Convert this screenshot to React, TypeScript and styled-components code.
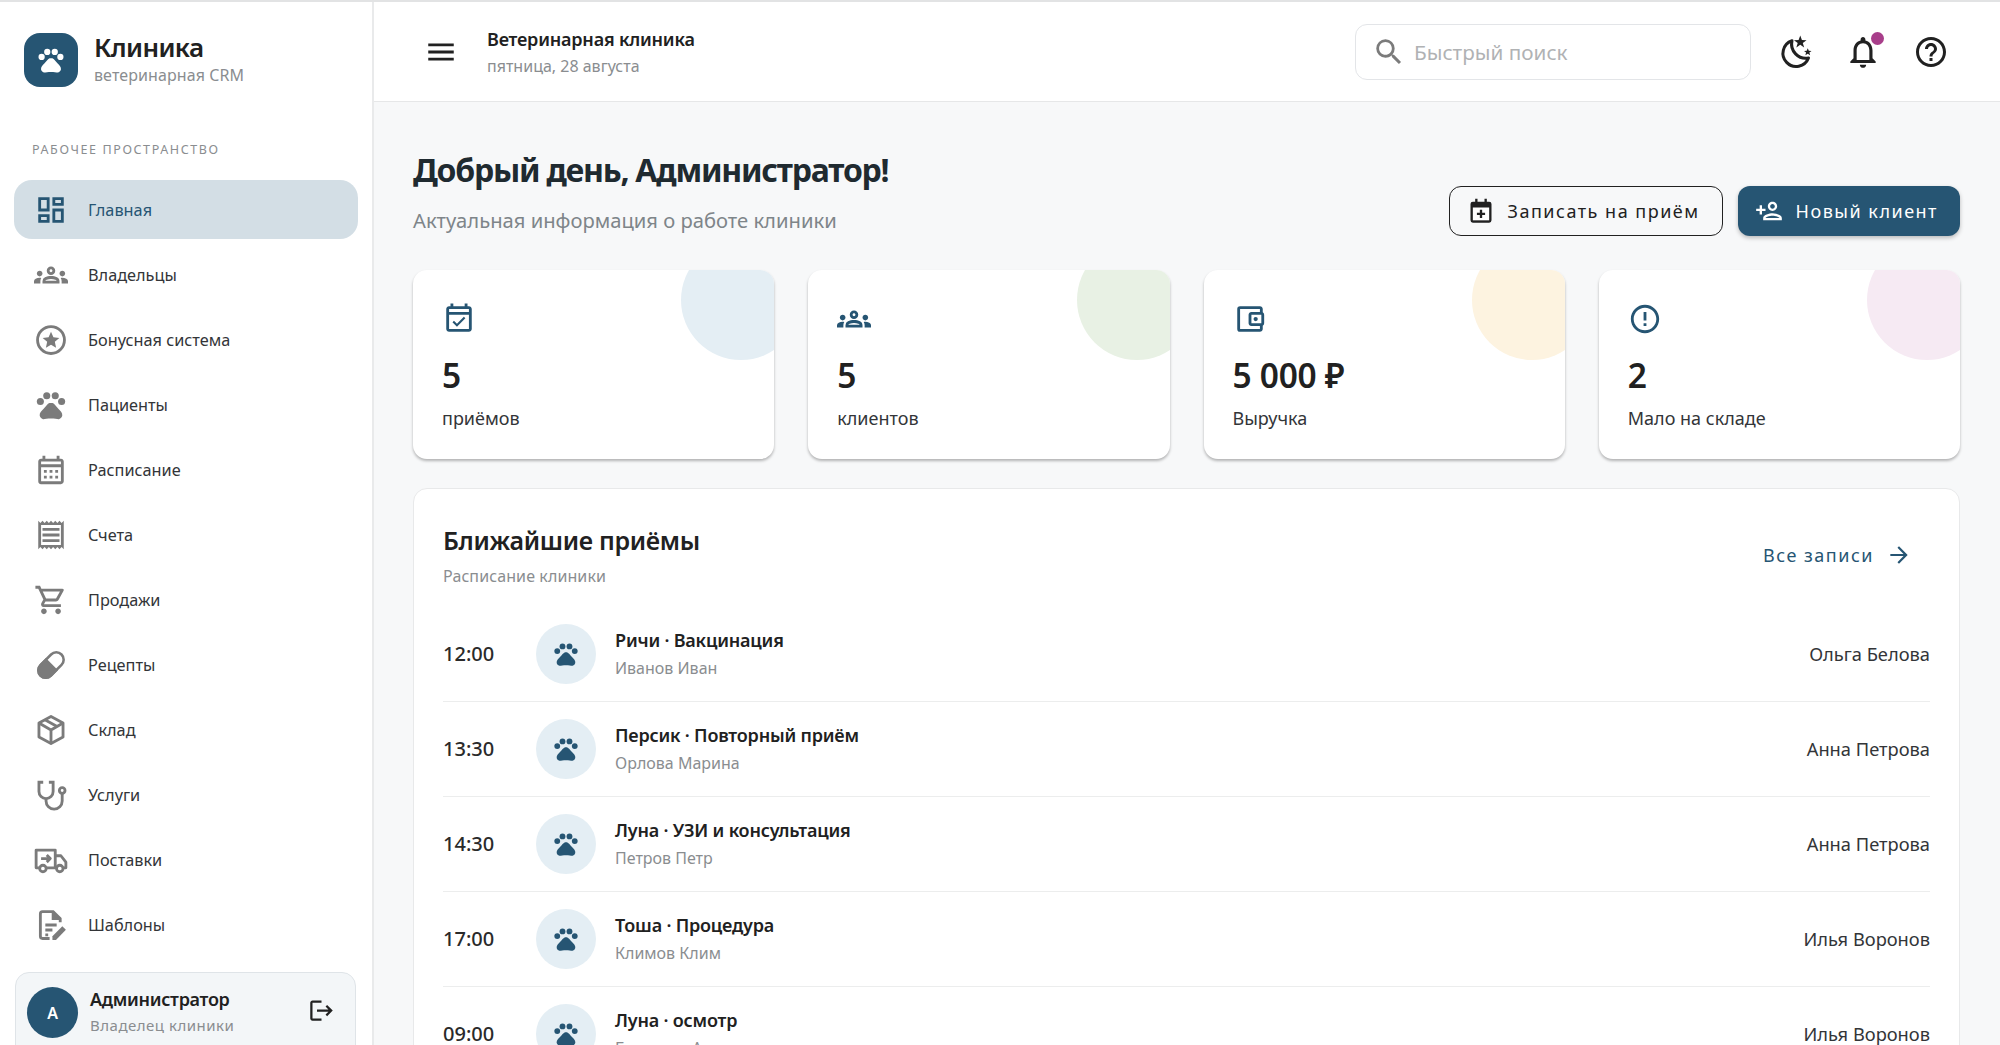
import * as React from "react";
import styled, { createGlobalStyle } from "styled-components";
import {
  MdArrowForward,
  MdErrorOutline,
  MdHelpOutline,
  MdLogout,
  MdMenu,
  MdOutlineAccountBalanceWallet,
  MdOutlineCalendarMonth,
  MdOutlineDashboard,
  MdOutlineEventAvailable,
  MdOutlineGroups,
  MdOutlineNotifications,
  MdOutlinePersonAdd,
  MdOutlineReceipt,
  MdOutlineShoppingCart,
  MdPets,
  MdSearch,
} from "react-icons/md";

const FONT = `"Noto Sans", "Open Sans", Roboto, sans-serif`;
const PRIMARY = "#265573";

const GlobalStyle = createGlobalStyle`
  html, body {
    margin: 0;
    padding: 0;
    height: 100%;
    overflow: hidden;
    background: #f7f8f9;
  }
  * { box-sizing: border-box; }
  body { font-family: ${FONT}; color: #212121; }
`;

function BonusIcon() {
  return (
    <svg viewBox="0 0 24 24" width="1em" height="1em" fill="none" stroke="currentColor" strokeWidth="2">
      <circle cx="12" cy="12" r="9.5" />
      <path d="m12 6.2 1.7 3.9 4.2.4-3.2 2.8.9 4.1L12 15.3l-3.6 2.1.9-4.1-3.2-2.8 4.2-.4z" fill="currentColor" stroke="none" />
    </svg>
  );
}

function PillIcon() {
  return (
    <svg viewBox="0 0 24 24" width="1em" height="1em" fill="none" stroke="currentColor" strokeWidth="1.8">
      <g transform="rotate(-45 12 12)">
        <rect x="1.5" y="6.8" width="21" height="10.4" rx="5.2" />
        <path d="M12 6.8H6.7a5.2 5.2 0 0 0 0 10.4H12z" fill="currentColor" />
      </g>
    </svg>
  );
}

function BoxIcon() {
  return (
    <svg viewBox="0 0 24 24" width="1em" height="1em" fill="none" stroke="currentColor" strokeWidth="2" strokeLinejoin="round">
      <path d="M12 2.5 20.5 7v10L12 21.5 3.5 17V7z" />
      <path d="M3.5 7 12 12l8.5-5M12 12v9.5M7.7 4.8l8.6 4.7" />
    </svg>
  );
}

function StethoscopeIcon() {
  return (
    <svg viewBox="0 0 24 24" width="1em" height="1em" fill="none" stroke="currentColor" strokeWidth="2">
      <path d="M6.5 3H3.5v6.5a5 5 0 0 0 10 0V3h-3" />
      <path d="M8.5 14.5v1.8a5.7 5.7 0 0 0 11.4 0V11" />
      <circle cx="19.9" cy="8.8" r="2" />
    </svg>
  );
}

function TruckIcon() {
  return (
    <svg viewBox="0 0 24 24" width="1em" height="1em" fill="none" stroke="currentColor" strokeWidth="2" strokeLinejoin="round">
      <path d="M3.5 17.5H1.5V5H15v12.5H9" />
      <path d="M15 9h4l3.5 4.5v4H21M15 17.5h.5" />
      <circle cx="6.3" cy="18" r="2.3" />
      <circle cx="18.2" cy="18" r="2.3" />
      <path d="M5 11h6.500M9 8.500l2.500 2.500L9 13.500" />
    </svg>
  );
}

function TemplateIcon() {
  return (
    <svg viewBox="0 0 24 24" width="1em" height="1em" fill="none" stroke="currentColor" strokeWidth="2">
      <path d="M11 21.5H6A1.500 1.500 0 0 1 4.500 20V4A1.500 1.500 0 0 1 6 2.500h7.500l5 5V10" />
      <path d="M13.500 2.500v5h5" fill="currentColor" />
      <path d="M8 12h8M8 15.500h5M8 19h2" />
      <path d="M13 22.500v-2.600l7-7 2.500 2.500-7 7.100z" fill="currentColor" stroke="none" />
    </svg>
  );
}

function NightIcon() {
  return (
    <svg viewBox="0 0 24 24" width="1em" height="1em" fill="none" stroke="currentColor" strokeWidth="2">
      <path d="M10 4.500a8.800 8.800 0 1 0 11 11.500 9.500 9.500 0 0 1-11-11.500z" strokeLinejoin="round" />
      <path d="m15.500 1 1.100 3 3.100.1-2.500 1.900.9 3-2.600-1.800-2.600 1.800.9-3-2.500-1.900 3.100-.1z" fill="currentColor" stroke="none" />
      <path d="m20.500 9.500.7 1.700 1.800.1-1.400 1.100.5 1.800-1.600-1-1.600 1 .5-1.800-1.400-1.100 1.800-.1z" fill="currentColor" stroke="none" />
    </svg>
  );
}

function CalendarAddIcon() {
  return (
    <svg viewBox="0 0 24 24" width="1em" height="1em" fill="currentColor">
      <path d="M7 1.500h2V4h6V1.500h2V4h2a2 2 0 0 1 2 2v14a2 2 0 0 1-2 2H5a2 2 0 0 1-2-2V6a2 2 0 0 1 2-2h2z" />
      <rect x="5" y="9" width="14" height="11" fill="#fff" />
      <path d="M11 11h2v2.500h2.500v2H13V18h-2v-2.500H8.500v-2H11z" />
    </svg>
  );
}

const Shell = styled.div`
  display: flex;
  height: 1045px;
  overflow: hidden;
  border-top: 2px solid #e2e3e4;
  background: #f7f8f9;
`;

const Sidebar = styled.aside`
  flex: 0 0 374px;
  display: flex;
  flex-direction: column;
  background: #ffffff;
  border-right: 2px solid #e9eaeb;
  padding: 31px 14px 0 14px;
`;

const Brand = styled.div`
  display: flex;
  align-items: flex-start;
  gap: 16px;
  padding-left: 10px;
`;

const BrandMark = styled.div`
  width: 54px;
  height: 54px;
  border-radius: 16px;
  background: ${PRIMARY};
  color: #fff;
  display: flex;
  align-items: center;
  justify-content: center;
  font-size: 30px;
`;

const BrandText = styled.div`
  display: flex;
  flex-direction: column;
  gap: 4px;
`;

const BrandName = styled.div`
  font-size: 26px;
  font-weight: 600;
  line-height: 28px;
  letter-spacing: -0.6px;
  color: #212121;
`;

const BrandSub = styled.div`
  font-size: 16px;
  line-height: 20px;
  letter-spacing: 0.1px;
  color: #8a8d90;
`;

const SectionLabel = styled.div`
  margin: 54px 0 21px 18px;
  font-size: 12.5px;
  line-height: 18px;
  letter-spacing: 1.6px;
  color: #8a8d90;
`;

const NavList = styled.nav`
  display: flex;
  flex-direction: column;
  gap: 6px;
`;

const NavItem = styled.div<{ $active?: boolean }>`
  flex: 0 0 59px;
  display: flex;
  align-items: center;
  gap: 20px;
  padding-left: 20px;
  border-radius: 18px;
  font-size: 16.3px;
  background: ${(p) => (p.$active ? "#d3dee5" : "transparent")};
  color: ${(p) => (p.$active ? PRIMARY : "#333538")};
`;

const NavIcon = styled.span<{ $active?: boolean }>`
  width: 34px;
  height: 34px;
  font-size: 34px;
  display: flex;
  color: ${(p) => (p.$active ? PRIMARY : "#7b7b7b")};
`;

const UserCard = styled.div`
  margin: 18px 2px 0 1px;
  flex: 0 0 90px;
  display: flex;
  align-items: flex-start;
  gap: 12px;
  padding: 14px 20px 0 11px;
  border: 1px solid #dfe4e8;
  border-radius: 14px;
  background: #f3f6f8;
`;

const Avatar = styled.div`
  width: 51px;
  height: 51px;
  flex: none;
  border-radius: 50%;
  background: ${PRIMARY};
  color: #fff;
  font-size: 16px;
  font-weight: 600;
  display: flex;
  align-items: center;
  justify-content: center;
`;

const UserText = styled.div`
  flex: 1;
  display: flex;
  flex-direction: column;
  gap: 3px;
`;

const UserName = styled.div`
  font-size: 18px;
  line-height: 24px;
  font-weight: 600;
  letter-spacing: -0.3px;
`;

const UserRole = styled.div`
  font-size: 15px;
  line-height: 22px;
  letter-spacing: 0.5px;
  color: #8a8d90;
`;

const LogoutButton = styled.div`
  display: flex;
  font-size: 27px;
  margin-top: 10px;
  color: #212121;
`;

const Main = styled.div`
  flex: 1;
  min-width: 0;
  display: flex;
  flex-direction: column;
`;

const Topbar = styled.header`
  flex: 0 0 100px;
  display: flex;
  align-items: center;
  padding: 0 35px 0 50px;
  background: #ffffff;
  border-bottom: 1px solid #e6e7e8;
`;

const MenuButton = styled.div`
  display: flex;
  font-size: 34px;
  color: #212121;
  margin-right: 29px;
`;

const TopTitleBlock = styled.div`
  flex: 1;
  display: flex;
  flex-direction: column;
  gap: 5px;
`;

const TopTitle = styled.div`
  font-size: 18px;
  line-height: 24px;
  font-weight: 600;
  letter-spacing: -0.2px;
`;

const TopSub = styled.div`
  font-size: 16px;
  line-height: 20px;
  color: #8a8d90;
`;

const Search = styled.div`
  width: 396px;
  height: 56px;
  display: flex;
  align-items: center;
  gap: 8px;
  padding-left: 16px;
  border: 1px solid #e3e5e8;
  border-radius: 12px;
  color: #7b7b7b;
  font-size: 34px;
  margin-right: 10px;
  svg { flex: none; }
`;

const SearchHint = styled.span`
  font-size: 20.7px;
  color: #b0b2b4;
`;

const TopIcon = styled.div<{ $size?: number }>`
  position: relative;
  width: 68px;
  height: 36px;
  display: flex;
  align-items: center;
  justify-content: center;
  font-size: ${(p) => p.$size ?? 36}px;
  color: #212121;
`;

const Dot = styled.span`
  position: absolute;
  top: -2px;
  left: 42px;
  width: 13px;
  height: 13px;
  border-radius: 50%;
  background: #a83e8a;
`;

const Content = styled.main`
  flex: 1;
  padding: 45px 40px 0 39px;
`;

const Hero = styled.div`
  display: flex;
  align-items: flex-end;
  justify-content: space-between;
`;

const Greeting = styled.h1`
  margin: 0 0 12px;
  font-size: 32px;
  line-height: 46px;
  font-weight: 700;
  letter-spacing: -1.25px;
  color: #1f2a30;
`;

const GreetingSub = styled.div`
  font-size: 20.2px;
  line-height: 31px;
  color: #7e8589;
`;

const Actions = styled.div`
  display: flex;
  gap: 15px;
`;

const ActionButton = styled.div<{ $primary?: boolean }>`
  height: 50px;
  display: flex;
  align-items: center;
  gap: 13px;
  padding: 0 22px 0 17px;
  border-radius: 12px;
  font-size: 18px;
  letter-spacing: 1.5px;
  background: ${(p) => (p.$primary ? PRIMARY : "transparent")};
  color: ${(p) => (p.$primary ? "#fff" : "#212121")};
  border: ${(p) => (p.$primary ? "none" : "1.5px solid #212121")};
  box-shadow: ${(p) => (p.$primary ? "0 2px 4px rgba(0,0,0,.25)" : "none")};
  svg { font-size: 28px; flex: none; }
`;

const StatGrid = styled.div`
  margin-top: 34px;
  display: grid;
  grid-template-columns: repeat(4, 1fr);
  gap: 34px;
`;

const StatCard = styled.div`
  position: relative;
  overflow: hidden;
  height: 189px;
  padding: 32px 29px 0;
  border-radius: 14px;
  background: #fff;
  box-shadow: 0 2px 3px rgba(0, 0, 0, 0.28);
`;

const StatBlob = styled.span<{ $color: string }>`
  position: absolute;
  top: -30px;
  right: -27px;
  width: 120px;
  height: 120px;
  border-radius: 50%;
  background: ${(p) => p.$color};
`;

const StatIcon = styled.div`
  display: flex;
  font-size: 34px;
  color: ${PRIMARY};
`;

const StatValue = styled.div`
  margin-top: 17px;
  font-size: 33.5px;
  line-height: 44px;
  font-weight: 600;
  letter-spacing: -0.3px;
`;

const StatLabel = styled.div`
  margin-top: 8px;
  font-size: 18px;
  line-height: 26px;
  color: #333538;
`;

const Panel = styled.section`
  margin-top: 29px;
  height: 620px;
  padding: 33px 29px 0;
  border: 1px solid #e8e9ea;
  border-radius: 14px;
  background: #fff;
`;

const PanelHead = styled.div`
  display: flex;
  justify-content: space-between;
  align-items: center;
`;

const PanelTitle = styled.h2`
  margin: 0 0 7px;
  font-size: 25px;
  line-height: 36px;
  font-weight: 600;
  letter-spacing: -0.3px;
`;

const PanelSub = styled.div`
  font-size: 16px;
  line-height: 22px;
  letter-spacing: 0.1px;
  color: #8a8d90;
`;

const AllLink = styled.div`
  display: flex;
  align-items: center;
  gap: 12px;
  margin-right: 18px;
  font-size: 18px;
  letter-spacing: 1.5px;
  color: ${PRIMARY};
  svg { font-size: 26px; }
`;

const VisitList = styled.div`
  margin-top: 20px;
`;

const VisitRow = styled.div`
  height: 95px;
  display: flex;
  align-items: center;
  border-bottom: 1px solid #eceded;
  padding-bottom: 1px;
`;

const VisitTime = styled.div`
  flex: 0 0 93px;
  font-size: 20px;
  font-weight: 500;
  color: #2a2a2a;
`;

const VisitBadge = styled.div`
  flex: none;
  width: 60px;
  height: 60px;
  margin-right: 19px;
  border-radius: 50%;
  background: #e4eef4;
  color: ${PRIMARY};
  font-size: 28px;
  display: flex;
  align-items: center;
  justify-content: center;
`;

const VisitText = styled.div`
  flex: 1;
  display: flex;
  flex-direction: column;
  gap: 5px;
`;

const VisitTitle = styled.div`
  font-size: 18px;
  line-height: 24px;
  font-weight: 600;
  letter-spacing: -0.2px;
`;

const VisitOwner = styled.div`
  font-size: 16px;
  line-height: 22px;
  color: #8a8d90;
`;

const VisitDoctor = styled.div`
  font-size: 18.3px;
  color: #333538;
`;

const NAV_ITEMS = [
  { label: "Главная", icon: <MdOutlineDashboard />, active: true },
  { label: "Владельцы", icon: <MdOutlineGroups /> },
  { label: "Бонусная система", icon: <BonusIcon /> },
  { label: "Пациенты", icon: <MdPets /> },
  { label: "Расписание", icon: <MdOutlineCalendarMonth /> },
  { label: "Счета", icon: <MdOutlineReceipt /> },
  { label: "Продажи", icon: <MdOutlineShoppingCart /> },
  { label: "Рецепты", icon: <PillIcon /> },
  { label: "Склад", icon: <BoxIcon /> },
  { label: "Услуги", icon: <StethoscopeIcon /> },
  { label: "Поставки", icon: <TruckIcon /> },
  { label: "Шаблоны", icon: <TemplateIcon /> },
];

const STATS = [
  { value: "5", label: "приёмов", color: "#e4eef4", icon: <MdOutlineEventAvailable /> },
  { value: "5", label: "клиентов", color: "#e8f1e4", icon: <MdOutlineGroups /> },
  { value: "5 000 ₽", label: "Выручка", color: "#fdf3e0", icon: <MdOutlineAccountBalanceWallet /> },
  { value: "2", label: "Мало на складе", color: "#f6eaf3", icon: <MdErrorOutline /> },
];

const VISITS = [
  { time: "12:00", title: "Ричи · Вакцинация", owner: "Иванов Иван", doctor: "Ольга Белова" },
  { time: "13:30", title: "Персик · Повторный приём", owner: "Орлова Марина", doctor: "Анна Петрова" },
  { time: "14:30", title: "Луна · УЗИ и консультация", owner: "Петров Петр", doctor: "Анна Петрова" },
  { time: "17:00", title: "Тоша · Процедура", owner: "Климов Клим", doctor: "Илья Воронов" },
  { time: "09:00", title: "Луна · осмотр", owner: "Белякова Анна", doctor: "Илья Воронов" },
];

export default function App(): React.ReactElement {
  return (
    <>
      <GlobalStyle />
      <Shell>
        <Sidebar>
          <Brand>
            <BrandMark>
              <MdPets />
            </BrandMark>
            <BrandText>
              <BrandName>Клиника</BrandName>
              <BrandSub>ветеринарная CRM</BrandSub>
            </BrandText>
          </Brand>
          <SectionLabel>РАБОЧЕЕ ПРОСТРАНСТВО</SectionLabel>
          <NavList>
            {NAV_ITEMS.map((item) => (
              <NavItem key={item.label} $active={item.active}>
                <NavIcon $active={item.active}>{item.icon}</NavIcon>
                {item.label}
              </NavItem>
            ))}
          </NavList>
          <UserCard>
            <Avatar>А</Avatar>
            <UserText>
              <UserName>Администратор</UserName>
              <UserRole>Владелец клиники</UserRole>
            </UserText>
            <LogoutButton>
              <MdLogout />
            </LogoutButton>
          </UserCard>
        </Sidebar>
        <Main>
          <Topbar>
            <MenuButton>
              <MdMenu />
            </MenuButton>
            <TopTitleBlock>
              <TopTitle>Ветеринарная клиника</TopTitle>
              <TopSub>пятница, 28 августа</TopSub>
            </TopTitleBlock>
            <Search>
              <MdSearch />
              <SearchHint>Быстрый поиск</SearchHint>
            </Search>
            <TopIcon>
              <NightIcon />
            </TopIcon>
            <TopIcon $size={38}>
              <MdOutlineNotifications />
              <Dot />
            </TopIcon>
            <TopIcon>
              <MdHelpOutline />
            </TopIcon>
          </Topbar>
          <Content>
            <Hero>
              <div>
                <Greeting>Добрый день, Администратор!</Greeting>
                <GreetingSub>Актуальная информация о работе клиники</GreetingSub>
              </div>
              <Actions>
                <ActionButton>
                  <CalendarAddIcon />
                  Записать на приём
                </ActionButton>
                <ActionButton $primary>
                  <MdOutlinePersonAdd />
                  Новый клиент
                </ActionButton>
              </Actions>
            </Hero>
            <StatGrid>
              {STATS.map((stat) => (
                <StatCard key={stat.label}>
                  <StatBlob $color={stat.color} />
                  <StatIcon>{stat.icon}</StatIcon>
                  <StatValue>{stat.value}</StatValue>
                  <StatLabel>{stat.label}</StatLabel>
                </StatCard>
              ))}
            </StatGrid>
            <Panel>
              <PanelHead>
                <div>
                  <PanelTitle>Ближайшие приёмы</PanelTitle>
                  <PanelSub>Расписание клиники</PanelSub>
                </div>
                <AllLink>
                  Все записи
                  <MdArrowForward />
                </AllLink>
              </PanelHead>
              <VisitList>
                {VISITS.map((visit) => (
                  <VisitRow key={visit.time}>
                    <VisitTime>{visit.time}</VisitTime>
                    <VisitBadge>
                      <MdPets />
                    </VisitBadge>
                    <VisitText>
                      <VisitTitle>{visit.title}</VisitTitle>
                      <VisitOwner>{visit.owner}</VisitOwner>
                    </VisitText>
                    <VisitDoctor>{visit.doctor}</VisitDoctor>
                  </VisitRow>
                ))}
              </VisitList>
            </Panel>
          </Content>
        </Main>
      </Shell>
    </>
  );
}
